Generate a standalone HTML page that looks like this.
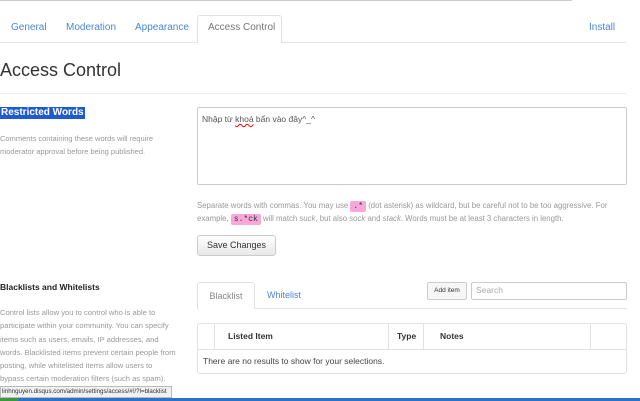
<!DOCTYPE html>
<html><head><meta charset="utf-8"><style>
*{box-sizing:border-box;margin:0;padding:0}
body{width:640px;height:401px;overflow:hidden;background:#fff;font-family:"Liberation Sans",sans-serif;position:relative;color:#333}
.a{position:absolute}
.tab{position:absolute;top:22px;font-size:10px;color:#4a86d8}
.small{font-size:7.5px;color:#999;line-height:13px}
code{background:#f7a8d8;font-family:"Liberation Mono",monospace;font-size:8px;padding:1px 3px;border-radius:2px;color:#333}
</style></head><body>
<div class="a" style="left:0;top:0;width:572px;height:1px;background:#ccc"></div>
<div class="a" style="left:0;top:42px;width:626px;height:1px;background:#e5e5e5"></div>
<div class="tab" style="left:11px">General</div>
<div class="tab" style="left:66px">Moderation</div>
<div class="tab" style="left:135px">Appearance</div>
<div class="a" style="left:197px;top:15px;width:85px;height:28px;border:1px solid #e2e2e2;border-bottom:none;background:#fff;border-radius:3px 3px 0 0"></div>
<div class="tab" style="left:208px;color:#777">Access Control</div>
<div class="tab" style="left:589px">Install</div>
<div class="a" style="left:0;top:60px;font-size:18px;color:#333">Access Control</div>
<div class="a" style="left:0;top:93px;width:626px;height:1px;background:#eee"></div>
<div class="a" style="left:0;top:107px;font-size:10px;font-weight:bold;background:#1f5bd0;color:#fff;padding:0 1px;line-height:12px">Restricted Words</div>
<div class="a small" style="left:0;top:132px;width:180px">Comments containing these words will require moderator approval before being published.</div>
<div class="a" style="left:197px;top:107px;width:430px;height:78px;border:1px solid #ccc;border-radius:2px;font-size:8.5px;color:#555;padding:6px 4px;font-family:'Liberation Sans','Noto Sans CJK SC',sans-serif">Nhập từ <span style="text-decoration:underline wavy red">khoá</span> bẩn vào đây^_^</div>
<div class="a small" style="left:197px;top:200px;width:425px;line-height:12px;font-size:7.8px">Separate words with commas. You may use <code>.*</code> (dot asterisk) as wildcard, but be careful not to be too aggressive. For<br>example, <code>s.*ck</code> will match <i>suck</i>, but also <i>sock</i> and <i>stack</i>. Words must be at least 3 characters in length.</div>
<div class="a" style="left:197px;top:235px;width:79px;height:21px;border:1px solid #ccc;border-radius:3px;background:linear-gradient(#fff,#e8e8e8);font-size:9px;text-align:center;line-height:19px;color:#333">Save Changes</div>
<div class="a" style="left:0;top:282px;font-size:8.5px;font-weight:bold;color:#222">Blacklists and Whitelists</div>
<div class="a small" style="left:0;top:306px;width:200px;line-height:13.3px;font-size:7.6px;white-space:nowrap">Control lists allow you to control who is able to<br>participate within your community. You can specify<br>items such as users, emails, IP addresses, and<br>words. Blacklisted items prevent certain people from<br>posting, while whitelisted items allow users to<br>bypass certain moderation filters (such as spam).</div>
<div class="a" style="left:197px;top:308px;width:430px;height:1px;background:#e2e2e2"></div>
<div class="a" style="left:197px;top:282px;width:58px;height:27px;border:1px solid #e2e2e2;border-bottom:none;background:#fff;border-radius:3px 3px 0 0;font-size:9px;color:#888;text-align:center;line-height:26px">Blacklist</div>
<div class="a" style="left:267px;top:290px;font-size:9px;color:#4a86d8">Whitelist</div>
<div class="a" style="left:427px;top:282px;width:40px;height:18px;border:1px solid #ccc;background:#f6f6f6;font-size:6.5px;text-align:center;line-height:16px;color:#333;border-radius:2px">Add item</div>
<div class="a" style="left:471px;top:282px;width:156px;height:18px;border:1px solid #ccc;border-radius:2px;font-size:8.5px;color:#aaa;padding:2px 4px">Search</div>
<div class="a" style="left:197px;top:323px;width:430px;height:51px;border:1px solid #e2e2e2;border-radius:3px"></div>
<div class="a" style="left:197px;top:349px;width:430px;height:1px;background:#e2e2e2"></div>
<div class="a" style="left:214px;top:323px;width:1px;height:26px;background:#e2e2e2"></div>
<div class="a" style="left:388px;top:323px;width:1px;height:26px;background:#e2e2e2"></div>
<div class="a" style="left:423px;top:323px;width:1px;height:26px;background:#e2e2e2"></div>
<div class="a" style="left:590px;top:323px;width:1px;height:26px;background:#e2e2e2"></div>
<div class="a" style="left:228px;top:331px;font-size:8.5px;font-weight:bold;color:#333">Listed Item</div>
<div class="a" style="left:397px;top:331px;font-size:8.5px;font-weight:bold;color:#333">Type</div>
<div class="a" style="left:440px;top:331px;font-size:8.5px;font-weight:bold;color:#333">Notes</div>
<div class="a" style="left:203px;top:356px;font-size:8.5px;color:#444">There are no results to show for your selections.</div>
<div class="a" style="left:0;top:386px;width:172px;height:12px;border:1px solid #bbb;background:#f1f1f1;font-size:6.2px;color:#333;line-height:10px;padding-left:1px;white-space:nowrap;overflow:hidden">linhnguyen.disqus.com/admin/settings/access/#!/?l=blacklist</div>
<div class="a" style="left:0;top:398px;width:640px;height:3px;background:#2a73c8"></div>
<div class="a" style="left:0;top:398px;width:18px;height:3px;background:#3a9a3a"></div>
</body></html>
